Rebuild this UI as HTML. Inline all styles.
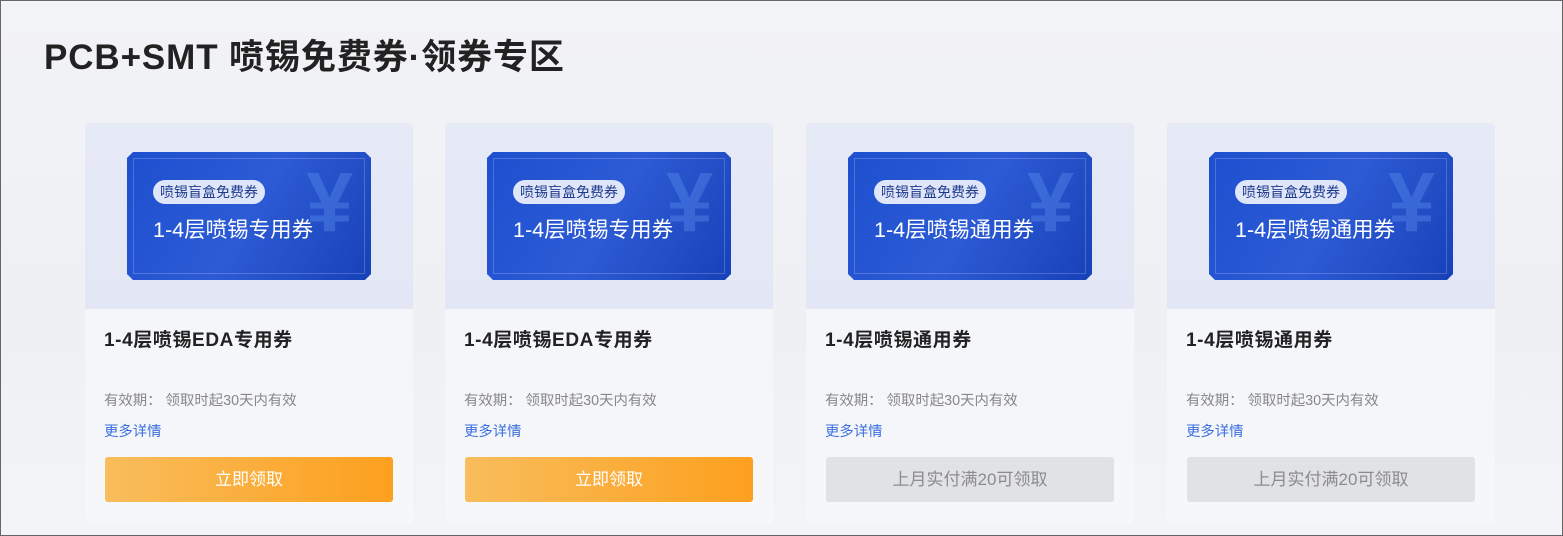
<!DOCTYPE html>
<html><head><meta charset="utf-8"><style>
*{margin:0;padding:0;box-sizing:border-box}
body{width:1563px;height:536px;overflow:hidden;font-family:"Liberation Sans","Noto Sans CJK SC",sans-serif;background:linear-gradient(180deg,#f2f3f6,#eef0f4 60%,#f3f4f7);border:1px solid #666;position:relative}
h1{position:absolute;left:43px;top:28px;font-size:35px;font-weight:700;color:#222;letter-spacing:0.9px}
.card{position:absolute;top:122px;width:328px;height:400px;background:rgba(247,248,251,0.7);border-radius:4px;overflow:hidden}
.top{height:186px;background:linear-gradient(180deg,#e6e9f6,#e3e7f5);position:relative}
.cp{position:absolute;left:42px;top:29px;width:244px;height:128px;background:linear-gradient(120deg,#1d4fcf,#2d5bd5 50%,#1741b8);clip-path:polygon(6px 0,calc(100% - 6px) 0,100% 6px,100% calc(100% - 6px),calc(100% - 6px) 100%,6px 100%,0 calc(100% - 6px),0 6px)}
.cp .in{position:absolute;left:6px;top:6px;right:6px;bottom:6px;border:1px solid rgba(255,255,255,0.2)}
.tag{position:absolute;left:26px;top:28px;height:24px;padding:0 7px;border-radius:12px;background:#dfe6fa;color:#1e3a8a;font-size:14px;line-height:24px}
.big{position:absolute;left:26px;top:61px;color:#fff;font-size:21.5px}
.yen{position:absolute;right:18px;top:8px;color:rgba(80,130,230,0.5);font-size:84px;font-weight:700;line-height:1}
.t{position:absolute;left:19px;top:202px;font-size:19px;font-weight:700;color:#222;letter-spacing:0.6px}
.v{position:absolute;left:19px;top:266px;font-size:14.4px;color:#888}
.m{position:absolute;left:19px;top:297px;font-size:14.4px;color:#3a6fe0}
.b{position:absolute;left:20px;top:334px;width:288px;height:45px;border-radius:3px;text-align:center;line-height:45px;font-size:17px;color:#fff;background:linear-gradient(90deg,#f8bd5c,#fda01e)}
.b.g{background:#e1e2e5;color:#8c8c8c}
</style></head><body>
<h1>PCB+SMT 喷锡免费券·领券专区</h1>
<div class="card" style="left:84px"><div class="top"><div class="cp"><div class="in"></div><div class="yen">¥</div><div class="tag">喷锡盲盒免费券</div><div class="big">1-4层喷锡专用券</div></div></div><div class="t">1-4层喷锡EDA专用券</div><div class="v">有效期： 领取时起30天内有效</div><div class="m">更多详情</div><div class="b">立即领取</div></div>
<div class="card" style="left:444px"><div class="top"><div class="cp"><div class="in"></div><div class="yen">¥</div><div class="tag">喷锡盲盒免费券</div><div class="big">1-4层喷锡专用券</div></div></div><div class="t">1-4层喷锡EDA专用券</div><div class="v">有效期： 领取时起30天内有效</div><div class="m">更多详情</div><div class="b">立即领取</div></div>
<div class="card" style="left:805px"><div class="top"><div class="cp"><div class="in"></div><div class="yen">¥</div><div class="tag">喷锡盲盒免费券</div><div class="big">1-4层喷锡通用券</div></div></div><div class="t">1-4层喷锡通用券</div><div class="v">有效期： 领取时起30天内有效</div><div class="m">更多详情</div><div class="b g">上月实付满20可领取</div></div>
<div class="card" style="left:1166px"><div class="top"><div class="cp"><div class="in"></div><div class="yen">¥</div><div class="tag">喷锡盲盒免费券</div><div class="big">1-4层喷锡通用券</div></div></div><div class="t">1-4层喷锡通用券</div><div class="v">有效期： 领取时起30天内有效</div><div class="m">更多详情</div><div class="b g">上月实付满20可领取</div></div>
</body></html>
